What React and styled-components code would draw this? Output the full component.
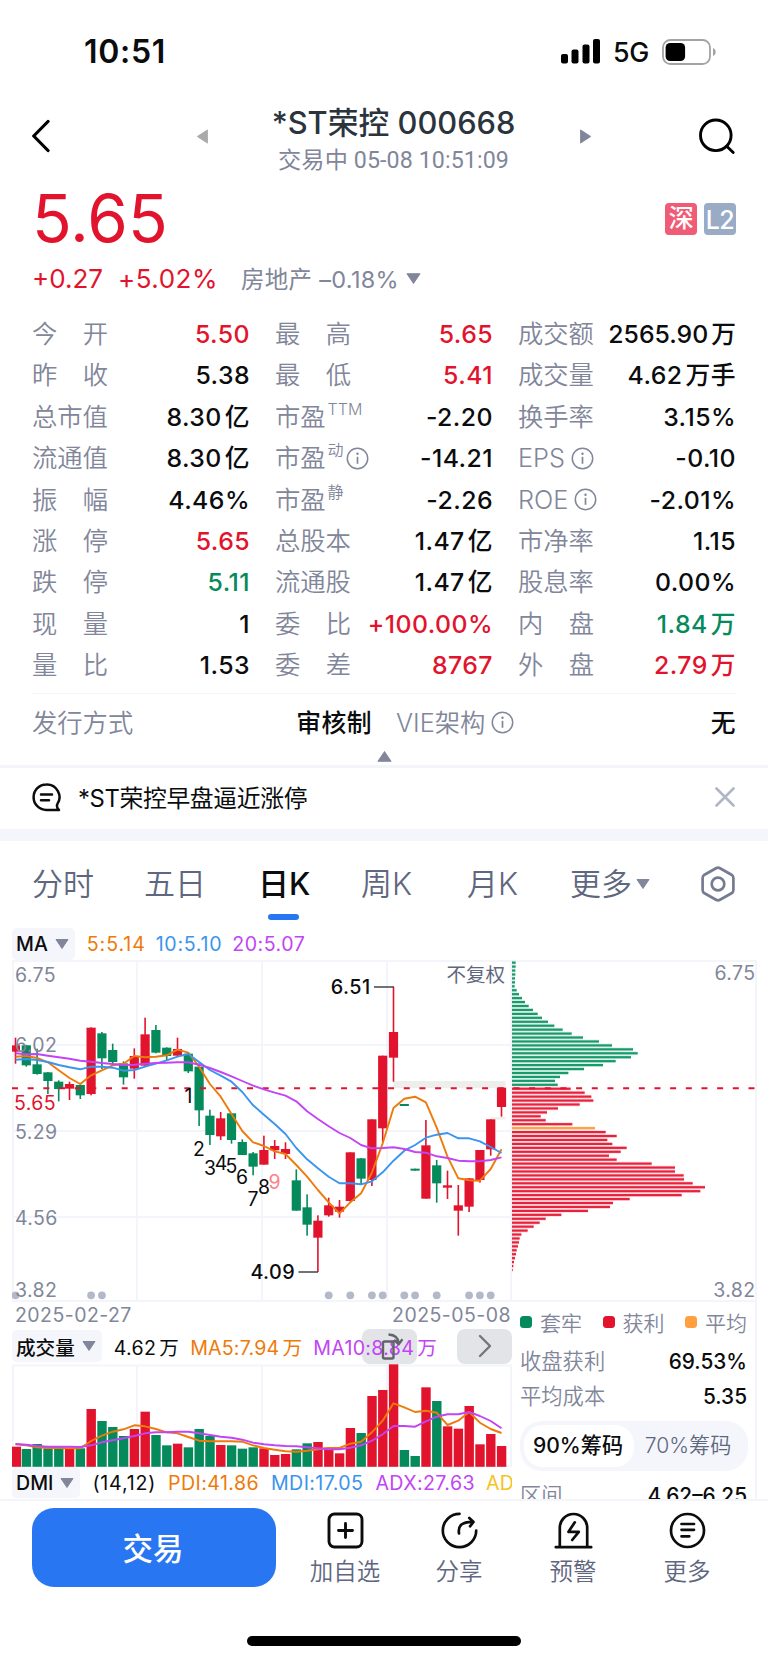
import styled, { createGlobalStyle } from "styled-components";

const RED = "#e2132c";
const GREEN = "#058a5c";
const GRAY = "#81869a";
const SLATE = "#5f6780";
const ORANGE = "#ee7a0a";
const BLUE = "#3b94ee";
const PURPLE = "#c244f5";
const LINE = "#f4f5fb";

const GlobalStyle = createGlobalStyle`
  *{
    box-sizing:border-box;
  }
  body{
    margin:0;
    background:#fff;
    color:#0b0c0e;
    font-family:Inter,"Noto Sans CJK SC",sans-serif;
  }
  svg{
    display:block;
    flex:none;
  }
`;
const Page = styled.div`
  width:768px;
  height:1663px;
  overflow:hidden;
  background:#fff;
  white-space:nowrap;
`;
const StatusBar = styled.div`
  height:92px;
  padding:11px 52px 0 84px;
  display:flex;
  align-items:center;
  justify-content:space-between;
`;
const Clock = styled.div`
  font-size:32px;
  font-weight:600;
  letter-spacing:.7px;
`;
const StatusIcons = styled.div`
  display:flex;
  align-items:center;
  gap:13px;
  font-size:26.8px;
  font-weight:500;
  letter-spacing:-.3px;
`;
const Header = styled.header`
  height:88px;
  padding:0 32px;
  display:flex;
  align-items:center;
  justify-content:space-between;
`;
const Switcher = styled.div`
  width:394px;
  margin-left:36px;
  display:flex;
  align-items:center;
  justify-content:space-between;
`;
const TitleBox = styled.div`
  padding-top:10px;
  text-align:center;
`;
const Title = styled.h1`
  margin:0;
  font-size:30.8px;
  line-height:38px;
  font-weight:500;
  color:#2b343c;
`;
const SubTitle = styled.div`
  font-family:Roboto,"Noto Sans CJK SC",sans-serif;
  font-size:23.2px;
  line-height:37px;
  color:${GRAY};
  font-weight:400;
  letter-spacing:.1px;
`;
const PriceRow = styled.div`
  height:78px;
  padding:0 32px;
  display:flex;
  align-items:center;
  justify-content:space-between;
`;
const Price = styled.div`
  font-size:65.5px;
  line-height:78px;
  color:${RED};
`;
const Badges = styled.div`
  display:flex;
  gap:7px;
`;
const Badge = styled.div`
  width:32px;
  height:32px;
  border-radius:4px;
  background:${p => p.$bg};
  color:#fff;
  font-size:25px;
  line-height:${p => p.$lh || 31}px;
  font-weight:500;
  text-align:center;
  letter-spacing:-.5px;
`;
const ChangeRow = styled.div`
  height:41px;
  padding:0 32px 1px;
  display:flex;
  align-items:center;
  font-size:26px;
  color:${RED};
`;
const Percent = styled.span`
  margin-left:15px;
  letter-spacing:.5px;
`;
const Sector = styled.span`
  margin:0 7px 0 23px;
  font-size:23.5px;
  letter-spacing:.3px;
  color:${GRAY};
`;
const QuoteGrid = styled.div`
  margin:14.4px 0 0;
  padding:0 33px 0 32px;
  display:grid;
  grid-template-columns:217px 217px 217px;
  column-gap:26px;
  grid-auto-rows:41.4px;
`;
const Cell = styled.div`
  display:flex;
  align-items:center;
  justify-content:space-between;
`;
const Label = styled.div`
  min-width:76px;
  display:flex;
  align-items:center;
  justify-content:${p => (p.$spread ? "space-between" : "flex-start")};
  font-size:25.3px;
  line-height:38px;
  font-weight:350;
  color:${GRAY};
  svg{
    margin-left:6px;
  }
`;
const Sup = styled.span`
  align-self:flex-start;
  margin:-8px -4px 0 2px;
  font-size:16px;
`;
const Value = styled.div`
  margin-right:-1px;
  font-size:24.8px;
  font-weight:500;
  line-height:38px;
  letter-spacing:${p => (p.$tight ? 0 : 0.45)}px;
  color:${p => p.$color || "#0b0c0e"};
`;
const Unit = styled.span`
  margin-left:3px;
`;
const ListingRow = styled.div`
  margin:7px 32px 0;
  height:58px;
  border-top:1px solid ${LINE};
  padding:1px 1px 0 0;
  display:grid;
  grid-template-columns:339px 1fr;
  column-gap:25px;
`;
const Fold = styled.div`
  height:14px;
  display:flex;
  justify-content:center;
  align-items:flex-start;
`;
const News = styled.div`
  height:64px;
  padding:0 33px 2px 32px;
  border-top:3px solid ${LINE};
  display:flex;
  align-items:center;
  font-size:23.8px;
`;
const NewsText = styled.div`
  flex:1;
  margin-left:17px;
  padding-bottom:2px;
  letter-spacing:-.35px;
`;
const Band = styled.div`
  height:12px;
  background:#f4f6fb;
`;
const Tabs = styled.nav`
  height:87px;
  padding:0 33px 0 32px;
  display:grid;
  grid-template-columns:112px 114px 103px 106px 103px 131px 34px;
  align-items:center;
`;
const Tab = styled.div`
  position:relative;
  display:flex;
  align-items:center;
  gap:4px;
  font-size:31px;
  line-height:46px;
  font-weight:${p => (p.$active ? 500 : 350)};
  color:${p => (p.$active ? "#0b0c0e" : SLATE)};
`;
const TabMark = styled.span`
  position:absolute;
  left:10px;
  top:53px;
  width:31px;
  height:6px;
  border-radius:3px;
  background:#2876f2;
`;
const Indicator = styled.div`
  height:${p => p.$h}px;
  display:flex;
  align-items:center;
  font-size:19.6px;
  position:relative;
  overflow:hidden;
`;
const Picker = styled.div`
  height:${p => p.$h}px;
  padding:0 6px 0 4px;
  margin-right:${p => p.$after}px;
  display:flex;
  align-items:center;
  gap:7px;
  border-radius:5px;
  background:#f5f6fb;
  font-weight:500;
`;
const Reading = styled.span`
  position:relative;
  z-index:1;
  color:${p => p.$color || "#0b0c0e"};
  margin-right:${p => p.$gap || 12}px;
  letter-spacing:${p => p.$track || 0.3}px;
`;
const ChartBox = styled.section`
  padding:0 11px 0 12px;
`;
const Lower = styled.div`
  height:197px;
  display:grid;
  grid-template-columns:500px 1fr;
  overflow:hidden;
`;
const Dates = styled.div`
  height:27px;
  padding:0 1px 0 3px;
  display:flex;
  align-items:center;
  justify-content:space-between;
  font-size:19.5px;
  letter-spacing:.45px;
  color:${GRAY};
`;
// the plate lies under the readings, its glyph over them
const GhostPlate = styled.div`
  position:absolute;
  top:0;
  left:${p => p.$left}px;
  width:55px;
  height:35px;
  border-radius:8px;
  background:#e3e4e8;
`;
const GhostGlyph = styled.div`
  position:absolute;
  z-index:2;
  top:0;
  left:${p => p.$left}px;
  width:55px;
  height:35px;
  display:flex;
  align-items:center;
  justify-content:center;
`;
const Side = styled.aside`
  padding:4px 8px 0 8px;
  border-right:2px solid ${LINE};
  font-size:21.3px;
  overflow:hidden;
`;
const Legend = styled.div`
  height:33px;
  display:flex;
  align-items:center;
  justify-content:space-between;
  color:${GRAY};
  font-size:21px;
  font-weight:350;
`;
const LegendItem = styled.div`
  display:flex;
  align-items:center;
  gap:8px;
  &:before{
    content:"";
    width:12px;
    height:12px;
    border-radius:3.5px;
    background:${p => p.$dot};
  }
`;
const SideRow = styled.div`
  height:35px;
  margin-top:${p => p.$mt || 0}px;
  display:flex;
  align-items:center;
  justify-content:space-between;
  line-height:35px;
  color:${GRAY};
  font-weight:350;
  b{
    color:#0b0c0e;
    font-weight:500;
    font-size:20.8px;
  }
`;
const Segmented = styled.div`
  height:50px;
  margin:7px -1px 7px 0;
  padding:4px;
  border-radius:22px;
  background:#f4f6fb;
  display:grid;
  grid-template-columns:110px 1fr;
`;
const Segment = styled.div`
  height:42px;
  padding-right:2px;
  line-height:42px;
  border-radius:19px;
  text-align:center;
  font-size:21.1px;
  font-weight:${p => (p.$on ? 500 : 350)};
  color:${p => (p.$on ? "#0b0c0e" : SLATE)};
  background:${p => (p.$on ? "#fff" : "transparent")};
`;
const BottomBar = styled.footer`
  height:164px;
  padding:7px 24px 0 32px;
  border-top:2px solid ${LINE};
  display:grid;
  grid-template-columns:244px repeat(4,114px);
  position:relative;
`;
const TradeButton = styled.button`
  width:244px;
  height:79px;
  padding:0 2px 0 0;
  border:0;
  border-radius:22px;
  background:#2876f2;
  color:#fff;
  font:500 30.5px "Noto Sans CJK SC",sans-serif;
`;
const Action = styled.div`
  padding-top:4px;
  width:138px;
  display:flex;
  flex-direction:column;
  align-items:center;
  color:${SLATE};
  font-size:23.5px;
  font-weight:350;
  line-height:34px;
  svg{
    margin-bottom:6px;
    color:#0b0c0e;
  }
`;
const HomeBar = styled.div`
  position:absolute;
  left:247px;
  top:135px;
  width:274px;
  height:10px;
  border-radius:5px;
  background:#000;
`;

// rows of [label, value, color, unit, extra]
const QUOTES = [
    ["今开", "5.50", RED], ["最高", "5.65", RED], ["成交额", "2565.90", null, "万"],
    ["昨收", "5.38"], ["最低", "5.41", RED], ["成交量", "4.62", null, "万手"],
    ["总市值", "8.30", null, "亿"], ["市盈", "-2.20", null, null, { sup: "TTM" }], ["换手率", "3.15%"],
    ["流通值", "8.30", null, "亿"], ["市盈", "-14.21", null, null, { sup: "动", info: true }], ["EPS", "-0.10", null, null, { info: true }],
    ["振幅", "4.46%"], ["市盈", "-2.26", null, null, { sup: "静" }], ["ROE", "-2.01%", null, null, { info: true }],
    ["涨停", "5.65", RED], ["总股本", "1.47", null, "亿"], ["市净率", "1.15"],
    ["跌停", "5.11", GREEN], ["流通股", "1.47", null, "亿"], ["股息率", "0.00%"],
    ["现量", "1"], ["委比", "+100.00%", RED], ["内盘", "1.84", GREEN, "万"],
    ["量比", "1.53"], ["委差", "8767", RED], ["外盘", "2.79", RED, "万"],
];

// up?, high, open/close top, open/close bottom, low, volume top (all in thirds of a pixel)
const CANDLES = [
    [1, 263, 286, 305, 341, 470], [0, 285, 286, 346, 350, 477], [0, 296, 343, 372, 374, 462],
    [0, 366, 367, 393, 432, 475], [0, 391, 395, 417, 454, 475], [1, 395, 402, 416, 450, 475],
    [0, 403, 405, 436, 447, 475], [1, 232, 233, 432, 436, 357], [0, 246, 250, 325, 357, 393],
    [0, 281, 300, 336, 345, 411], [0, 334, 340, 382, 404, 438], [1, 295, 318, 356, 386, 417],
    [1, 203, 253, 347, 347, 365], [0, 225, 240, 308, 310, 435], [0, 292, 293, 318, 330, 466],
    [1, 263, 297, 317, 317, 461], [0, 308, 311, 364, 369, 472], [0, 340, 350, 481, 528, 417],
    [0, 479, 497, 555, 585, 438], [1, 486, 505, 559, 570, 465], [0, 489, 490, 570, 581, 466],
    [0, 568, 576, 615, 615, 476], [0, 606, 610, 650, 676, 472], [1, 557, 600, 644, 644, 475],
    [1, 570, 588, 601, 627, 495], [1, 577, 597, 612, 627, 492], [0, 658, 691, 782, 782, 478],
    [0, 733, 772, 824, 857, 460], [1, 796, 812, 863, 966, 456], [1, 743, 766, 796, 800, 473],
    [1, 750, 770, 785, 803, 490], [1, 607, 607, 753, 755, 414], [0, 624, 625, 686, 705, 429],
    [1, 508, 508, 690, 708, 318], [1, 317, 317, 535, 575, 300], [1, 111, 246, 323, 395, 223],
    [0, 462, 462, 468, 468, 480], [0, 656, 656, 662, 662, 498], [1, 510, 586, 746, 746, 292],
    [0, 630, 646, 700, 758, 333], [1, 662, 706, 713, 747, 409], [1, 705, 766, 782, 857, 416],
    [1, 685, 685, 770, 786, 348], [1, 600, 600, 690, 698, 463], [1, 508, 508, 598, 617, 432],
    [1, 413, 413, 471, 500, 468],
];
const MA5 = [320, 318, 324, 337, 361, 384, 402, 376, 361, 346, 341, 318, 322, 320, 316, 299, 308, 350, 402, 440, 492, 543, 577, 588, 604, 612, 645, 680, 720, 757, 790, 757, 730, 668, 580, 474, 446, 440, 457, 533, 620, 685, 691, 692, 657, 598];
const MA10 = [329, 327, 330, 336, 345, 352, 358, 350, 350, 353, 362, 360, 350, 341, 331, 320, 312, 336, 360, 377, 395, 426, 466, 494, 522, 552, 594, 628, 655, 680, 700, 700, 703, 694, 667, 632, 602, 585, 563, 554, 549, 565, 565, 574, 591, 609];
const MA20 = [310, 313, 312, 317, 322, 326, 332, 335, 339, 342, 345, 344, 341, 339, 338, 337, 337, 344, 354, 366, 379, 393, 407, 418, 428, 437, 454, 484, 507, 529, 549, 564, 585, 595, 594, 592, 597, 606, 608, 619, 624, 632, 634, 634, 630, 622];
const VOL5 = [463, 466, 472, 474, 474, 475, 475, 453, 437, 425, 418, 406, 409, 417, 427, 430, 441, 452, 454, 454, 454, 455, 466, 474, 479, 484, 485, 482, 478, 474, 474, 461, 455, 427, 392, 340, 352, 366, 362, 368, 405, 392, 366, 398, 417, 429];
const VOL10 = [462, 464, 468, 470, 470, 470, 471, 466, 457, 451, 445, 438, 430, 427, 427, 425, 425, 430, 435, 440, 443, 449, 458, 463, 466, 468, 469, 472, 475, 478, 478, 473, 466, 452, 433, 408, 408, 410, 394, 380, 373, 373, 366, 378, 393, 415];
const CHIPS = [47, 47, 46, 46, 45, 45, 44, 50, 57, 66, 75, 86, 99, 113, 126, 144, 163, 188, 215, 249, 297, 336, 399, 413, 393, 347, 309, 252, 205, 180, 165, 173, 212, 254, 274, 280, 239, 174, 141, 122, 137, 217, 285, 317, 350, 322, 337, 380, 362, 327, 350, 455, 525, 525, 551, 552, 578, 615, 601, 545, 389, 339, 330, 264, 184, 137, 119, 101, 83, 64, 59, 57, 54, 50, 48, 45, 42, 40, 38];
const EVENTS = [0, 7, 8, 29, 31, 33, 34, 36, 37, 39, 42, 43, 44];
// nine-turn counter: digit, x, baseline
const TURNS = [[1, 188.5, 1103], [2, 199, 1156], [3, 210, 1175], [4, 221, 1170], [5, 231.5, 1173], [6, 242, 1184], [7, 253, 1206], [8, 264, 1194], [9, 274.5, 1189]];

const cx = i => 15.5 + i * 10.8;
const points = (list, top) => list.map((y, i) => `${cx(i).toFixed(1)},${(top + y / 3).toFixed(1)}`).join(" ");

function Triangle({ dir = "down", size = 15, color = GRAY }) {
    const rotate = { down: 0, up: 180, left: 90, right: -90 }[dir];
    const side = dir === "left" || dir === "right";
    const h = Math.round(size * 0.72);
    return (
        <svg width={side ? h : size} height={side ? size : h} viewBox={side ? "2 0 10 14" : "0 2 14 10"}>
            <path d="M1 2.5h12L7 11.5z" fill={color} stroke={color} strokeLinejoin="round" transform={`rotate(${rotate} 7 7)`} />
        </svg>
    );
}

function Info() {
    return (
        <svg width="23" height="23" viewBox="0 0 23 23" fill="none" stroke={GRAY}>
            <circle cx="11.5" cy="11.5" r="10.2" strokeWidth="1.5" />
            <path d="M11.5 9.8v7" strokeWidth="1.7" />
            <circle cx="11.5" cy="6.8" r="1.2" fill={GRAY} stroke="none" />
        </svg>
    );
}

function Quote({ item }) {
    const [label, value, color, unit, extra = {}] = item;
    const spread = label.length === 2 && !extra.sup;
    return (
        <Cell>
            <Label $spread={spread}>
                {spread ? label.split("").map(c => <span key={c}>{c}</span>) : label}
                {extra.sup && <Sup>{extra.sup}</Sup>}
                {extra.info && <Info />}
            </Label>
            <Value $color={color} $tight={value.length === 7 && unit}>{value}{unit && <Unit>{unit}</Unit>}</Value>
        </Cell>
    );
}

function KLineChart() {
    const axis = { fontSize: 19.5, fill: GRAY, letterSpacing: 0.4 };
    return (
        <svg width="745" height="342" viewBox="12 960 745 342">
            <g stroke={LINE} strokeWidth="2" fill="none">
                <path d="M12 961H757M12 1301H757M12 1045H511M12 1131H511M12 1217H511" />
                <path d="M13 960V1302M137 960V1302M262 960V1302M387 960V1302M511 960V1302M756 960V1302" />
            </g>
            <rect x="393.5" y="1081" width="112" height="7" fill="#eee" />
            <rect x="491" y="1117" width="14.5" height="2.5" fill="#eee" />
            {CHIPS.map((end, i) => {
                const fill = i < 32 ? "#189a6c" : i === 42 ? "#ffa043" : "#e8213c";
                const y = 950 + (38 + i * 11.82) / 3;
                return (
                    <g key={i} fill={fill}>
                        <rect x="512" y={y - 2} width={(end - 36) / 3} height="3.94" opacity=".15" />
                        <rect x="512" y={y - 1.1} width={(end - 36) / 3} height="2.2" />
                    </g>
                );
            })}
            {CANDLES.map(([up, high, top, bottom, low], i) => (
                <g key={i} fill={up ? RED : GREEN}>
                    <rect x={cx(i) - 0.8} y={950 + high / 3} width="1.6" height={(low - high) / 3} />
                    <rect x={Math.max(12, cx(i) - 4.6)} y={950 + top / 3} width={i ? 9.2 : 8} height={(bottom - top) / 3} />
                </g>
            ))}
            <path d="M12 1088.3H757" stroke={RED} strokeWidth="2" strokeDasharray="6 9.67" />
            <g fill="none" strokeWidth="1.9" strokeLinejoin="round">
                <polyline points={points(MA5, 950)} stroke={ORANGE} />
                <polyline points={points(MA10, 950)} stroke={BLUE} />
                <polyline points={points(MA20, 950)} stroke={PURPLE} />
            </g>
            {EVENTS.map(i => <circle key={i} cx={cx(i)} cy="1295.3" r="3.9" fill="#b3b9c9" />)}
            <g {...axis}>
                <text x="15" y="981.5">6.75</text>
                <text x="15" y="1052">6.02</text>
                <text x="14" y="1109.5" fill={RED}>5.65</text>
                <text x="15" y="1138.5">5.29</text>
                <text x="15" y="1224.5">4.56</text>
                <text x="15" y="1297">3.82</text>
                <text x="755.5" y="980" textAnchor="end">6.75</text>
                <text x="755.5" y="1297" textAnchor="end">3.82</text>
                <text x="505" y="981.5" textAnchor="end" fill={SLATE} letterSpacing="0">不复权</text>
            </g>
            <g fontSize="19.4" fill="#0b0c0e" textAnchor="middle">
                {TURNS.map(([n, x, y]) => <text key={n} x={x} y={y} fill={n === 9 ? "#fb8088" : "#0b0c0e"}>{n}</text>)}
            </g>
            <g fontSize="19.8" fontWeight="500" fill="#0b0c0e" textAnchor="end" letterSpacing=".4">
                <text x="370.5" y="994">6.51</text>
                <text x="295" y="1279">4.09</text>
            </g>
            <path d="M374 987H394M298.5 1272H318" stroke="#444" strokeWidth="1.4" />
        </svg>
    );
}

function VolumeChart() {
    return (
        <svg width="500" height="103" viewBox="12 1364 500 103">
            <g stroke={LINE} strokeWidth="2" fill="none">
                <path d="M12 1365.5H512M12 1466H512M13 1365V1467M137 1365V1467M262 1365V1467M387 1365V1467M511 1365V1467" />
            </g>
            {CANDLES.map((c, i) => {
                const y = 1290 + c[5] / 3;
                return <rect key={i} x={Math.max(12, cx(i) - 4.6)} y={y} width={i ? 9.4 : 9} height={1466.8 - y} fill={c[0] ? RED : GREEN} />;
            })}
            <g fill="none" strokeWidth="1.9" strokeLinejoin="round">
                <polyline points={points(VOL5, 1290)} stroke={ORANGE} />
                <polyline points={points(VOL10, 1290)} stroke={PURPLE} />
            </g>
        </svg>
    );
}

export default function App() {
    return (
        <Page>
            <GlobalStyle />
            <StatusBar>
                <Clock>10:51</Clock>
                <StatusIcons>
                    <svg width="39" height="25" viewBox="0 0 39 25">
                        <rect x="0" y="15" width="7" height="9.5" rx="2" />
                        <rect x="10.5" y="10.5" width="7" height="14" rx="2" />
                        <rect x="21.5" y="5.5" width="7" height="19" rx="2" />
                        <rect x="32" y="0" width="7" height="24.5" rx="2" />
                    </svg>
                    <span>5G</span>
                    <svg width="54" height="26" viewBox="0 0 54 26">
                        <rect x="1" y="1" width="47" height="24" rx="7.5" fill="none" stroke="#a3a3a3" strokeWidth="1.8" />
                        <rect x="3.6" y="4" width="19.5" height="18" rx="4.5" />
                        <path d="M51 9c3.6 1.2 3.6 6.8 0 8z" fill="#a3a3a3" />
                    </svg>
                </StatusIcons>
            </StatusBar>

            <Header>
                <svg width="20" height="34" viewBox="0 0 20 34" fill="none" stroke="#000" strokeWidth="3.2" strokeLinecap="round" strokeLinejoin="round">
                    <path d="M16 2.500L1.700 17L16 31.500" />
                </svg>
                <Switcher>
                    <Triangle dir="left" color="#aaaaaa" />
                    <TitleBox>
                        <Title>*ST荣控 000668</Title>
                        <SubTitle>交易中 05-08 10:51:09</SubTitle>
                    </TitleBox>
                    <Triangle dir="right" />
                </Switcher>
                <svg width="37" height="37" viewBox="0 0 37 37" fill="none" stroke="#000" strokeWidth="2.900" strokeLinecap="round">
                    <circle cx="16.800" cy="17.300" r="15.300" />
                    <path d="M28 28.500l6.200 6" />
                </svg>
            </Header>

            <PriceRow>
                <Price>5.65</Price>
                <Badges>
                    <Badge $bg="#f05b76">深</Badge>
                    <Badge $bg="#99abc5" $lh={34}>L2</Badge>
                </Badges>
            </PriceRow>
            <ChangeRow>
                +0.27<Percent>+5.02%</Percent>
                <Sector>房地产 –0.18%</Sector>
                <Triangle />
            </ChangeRow>

            <QuoteGrid>
                {QUOTES.map((q, i) => <Quote key={i} item={q} />)}
            </QuoteGrid>
            <ListingRow>
                <Cell>
                    <Label>发行方式</Label>
                    <Value>审核制</Value>
                </Cell>
                <Cell>
                    <Label>VIE架构<Info /></Label>
                    <Value>无</Value>
                </Cell>
            </ListingRow>
            <Fold><Triangle dir="up" /></Fold>

            <News>
                <svg width="29" height="29" viewBox="0 0 29 29" fill="none" stroke="#0b0c0e" strokeWidth="2.500" strokeLinejoin="round" strokeLinecap="round">
                    <path d="M14.300 1.500a12.700 12.700 0 1 0 0 25.400H27c-1.800-1.400-2.500-3-1.800-5.500A12.700 12.700 0 0 0 14.300 1.500z" />
                    <path d="M9 11.500h11M9 17.300h8" />
                </svg>
                <NewsText>*ST荣控早盘逼近涨停</NewsText>
                <svg width="20" height="20" viewBox="0 0 20 20" stroke="#b0b6c6" strokeWidth="2.600" strokeLinecap="round">
                    <path d="M1.500 1.500l17 17M18.500 1.500l-17 17" />
                </svg>
            </News>
            <Band />

            <Tabs>
                <Tab>分时</Tab>
                <Tab>五日</Tab>
                <Tab $active>日K<TabMark /></Tab>
                <Tab>周K</Tab>
                <Tab>月K</Tab>
                <Tab>更多<Triangle size={14} /></Tab>
                <svg width="34" height="36" viewBox="0 0 34 36" fill="none" stroke="#767c90" strokeWidth="2.700" strokeLinejoin="round">
                    <path d="M15 2.200q2-1.100 4 0l11.500 6.500q1.900 1.200 1.900 3.300v12q0 2.100-1.900 3.300L19 33.800q-2 1.100-4 0L3.500 27.300q-1.900-1.200-1.900-3.300V12q0-2.100 1.900-3.300z" />
                    <circle cx="17" cy="18" r="6.300" />
                </svg>
            </Tabs>

            <ChartBox>
                <Indicator $h={32}>
                    <Picker $h={32} $after={12}>MA<Triangle size={14} /></Picker>
                    <Reading $color={ORANGE} $gap={10} $track={0.9}>5:5.14</Reading>
                    <Reading $color={BLUE} $gap={10} $track={0.7}>10:5.10</Reading>
                    <Reading $color={PURPLE} $track={0.5}>20:5.07</Reading>
                </Indicator>
                <KLineChart />
                <Lower>
                    <div>
                        <Dates><span>2025-02-27</span><span>2025-05-08</span></Dates>
                        <Indicator $h={35}>
                            <Picker $h={32} $after={12}>成交量<Triangle size={14} /></Picker>
                            <Reading $gap={11}>4.62<Unit>万</Unit></Reading>
                            <Reading $color={ORANGE} $gap={11} $track={0.2}>MA5:7.94<Unit>万</Unit></Reading>
                            <Reading $color={PURPLE}>MA10:8.84<Unit>万</Unit></Reading>
                            <GhostPlate $left={350} />
                            <GhostPlate $left={445} />
                            <GhostGlyph $left={350}>
                                <svg width="26" height="28" viewBox="0 0 26 28" fill="none" stroke="#62646a" strokeWidth="2.4" strokeLinejoin="round">
                                    <rect x="6" y="9.500" width="10.500" height="17" rx="1.500" />
                                    <path d="M11.500 2.500c6 .3 10 3.500 10.500 9.500M17 8l4.700 4.200 3.800-5" />
                                </svg>
                            </GhostGlyph>
                            <GhostGlyph $left={445}>
                                <svg width="14" height="24" viewBox="0 0 14 24" fill="none" stroke="#74767c" strokeWidth="2.400" strokeLinejoin="round" strokeLinecap="round">
                                    <path d="M2 2l10 10L2 22" />
                                </svg>
                            </GhostGlyph>
                        </Indicator>
                        <VolumeChart />
                        <Indicator $h={32}>
                            <Picker $h={31} $after={12}>DMI<Triangle size={14} /></Picker>
                            <Reading $track={0.8}>(14,12)</Reading>
                            <Reading $color={ORANGE} $track={0.4}>PDI:41.86</Reading>
                            <Reading $color={BLUE} $track={0.4}>MDI:17.05</Reading>
                            <Reading $color={PURPLE} $gap={11} $track={0.4}>ADX:27.63</Reading>
                            <Reading $color="#f6c21c" $gap={0.1}>AD</Reading>
                        </Indicator>
                    </div>
                    <Side>
                        <Legend>
                            <LegendItem $dot={GREEN}>套牢</LegendItem>
                            <LegendItem $dot={RED}>获利</LegendItem>
                            <LegendItem $dot="#ff9f40">平均</LegendItem>
                        </Legend>
                        <SideRow $mt={5}>收盘获利<b>69.53%</b></SideRow>
                        <SideRow>平均成本<b>5.35</b></SideRow>
                        <Segmented>
                            <Segment $on>90%筹码</Segment>
                            <Segment>70%筹码</Segment>
                        </Segmented>
                        <SideRow>区间<b>4.62–6.25</b></SideRow>
                    </Side>
                </Lower>
            </ChartBox>

            <BottomBar>
                <TradeButton>交易</TradeButton>
                <Action>
                    <svg width="37" height="37" viewBox="0 0 37 37" fill="none" stroke="currentColor" strokeWidth="2.900" strokeLinecap="round">
                        <rect x="2" y="2" width="33" height="33" rx="5.500" />
                        <path d="M18.500 11.500v14M11.500 18.500h14" />
                    </svg>
                    加自选
                </Action>
                <Action>
                    <svg width="37" height="37" viewBox="0 0 37 37" fill="none" stroke="currentColor" strokeWidth="2.700" strokeLinecap="round" strokeLinejoin="round">
                        <path d="M18.500 1.800A16.700 16.700 0 1 0 35.200 18.500" />
                        <path d="M18 21.500C16.800 14 20.500 9.800 31.500 9.800M28.300 6l4.200 4-3.500 4.300" />
                    </svg>
                    分享
                </Action>
                <Action>
                    <svg width="39" height="37" viewBox="-1 0 39 37" fill="none" stroke="currentColor" strokeWidth="2.700" strokeLinecap="round" strokeLinejoin="round">
                        <path d="M4.800 34.500V15.700a13.700 13.700 0 0 1 27.400 0V34.500M.8 35.200h35.400" />
                        <path d="M19.800 10.300l-6.300 9.500h10.300L17.200 28" />
                    </svg>
                    预警
                </Action>
                <Action>
                    <svg width="37" height="37" viewBox="0 0 37 37" fill="none" stroke="currentColor" strokeWidth="2.700" strokeLinecap="round">
                        <circle cx="18.500" cy="18.500" r="16.500" />
                        <path d="M12.500 12h12.500M12.500 17.800h12.500M12.500 24.300h7.800" />
                    </svg>
                    更多
                </Action>
                <HomeBar />
            </BottomBar>
        </Page>
    );
}
